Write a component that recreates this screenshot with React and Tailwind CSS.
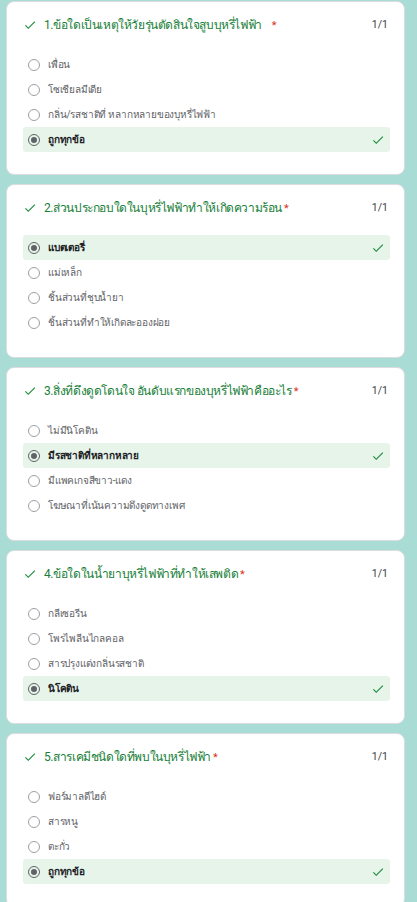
import React from "react";

const questions = [
  {
    title: "1.ข้อใดเป็นเหตุให้วัยรุ่นตัดสินใจสูบบุหรี่ไฟฟ้า",
    spaced: true,
    options: ["เพื่อน", "โซเชียลมีเดีย", "กลิ่น/รสชาติที่ หลากหลายของบุหรี่ไฟฟ้า", "ถูกทุกข้อ"],
    correct: 3,
  },
  {
    title: "2.ส่วนประกอบใดในบุหรี่ไฟฟ้าทำให้เกิดความร้อน",
    options: ["แบตเตอรี่", "แม่เหล็ก", "ชิ้นส่วนที่ชุบน้ำยา", "ชิ้นส่วนที่ทำให้เกิดละอองฝอย"],
    correct: 0,
  },
  {
    title: "3.สิ่งที่ดึงดูดโดนใจ อันดับแรกของบุหรี่ไฟฟ้าคืออะไร",
    options: ["ไม่มีนิโคติน", "มีรสชาติที่หลากหลาย", "มีแพคเกจสีขาว-แดง", "โฆษณาที่เน้นความดึงดูดทางเพศ"],
    correct: 1,
  },
  {
    title: "4.ข้อใดในน้ำยาบุหรี่ไฟฟ้าที่ทำให้เสพติด",
    options: ["กลีเซอรีน", "โพรไพลีนไกลคอล", "สารปรุงแต่งกลิ่นรสชาติ", "นิโคติน"],
    correct: 3,
  },
  {
    title: "5.สารเคมีชนิดใดที่พบในบุหรี่ไฟฟ้า",
    options: ["ฟอร์มาลดีไฮด์", "สารหนู", "ตะกั่ว", "ถูกทุกข้อ"],
    correct: 3,
  },
];

function Check({ className }) {
  return (
    <svg viewBox="0 0 24 24" className={className} fill="currentColor">
      <path d="M9 16.17L4.83 12l-1.42 1.41L9 19 21 7l-1.41-1.41z" />
    </svg>
  );
}

function Radio({ selected }) {
  return selected ? (
    <span className="w-3 h-3 rounded-full border-[1.5px] border-[#5f6368] flex items-center justify-center shrink-0">
      <span className="w-[6px] h-[6px] rounded-full bg-[#5f6368]" />
    </span>
  ) : (
    <span className="w-3 h-3 rounded-full border-[1.5px] border-[#9aa0a6] shrink-0" />
  );
}

function Card({ q }) {
  return (
    <div className="bg-white rounded-lg border border-[#dadce0] h-[174px] shrink-0 pl-4 pr-[14px] pt-[13px]">
      <div className="flex items-center h-5">
        <Check className="w-[14px] h-[14px] text-[#1e8e3e] shrink-0" />
        <div className="ml-[7px] text-[12px] tracking-[-0.4px] text-[#188038] flex-1 whitespace-nowrap">
          {q.title}
          {q.spaced ? (
            <span className="text-[#d93025] ml-[10px] text-[11px]">*</span>
          ) : (
            <span className="text-[#d93025] ml-[2px] text-[11px]">*</span>
          )}
        </div>
        <div className="text-[10.5px] text-[#3c4043] mr-[2px]">1/1</div>
      </div>
      <div className="mt-[17px] flex flex-col">
        {q.options.map((o, i) => {
          const sel = i === q.correct;
          return (
            <div
              key={i}
              className={
                "h-[25px] flex items-center pl-[5px] pr-[5px] rounded-[3px] " +
                (sel ? "bg-[#e6f4ea]" : "")
              }
            >
              <Radio selected={sel} />
              <span
                className={
                  "ml-2 text-[10px] tracking-[-0.2px] flex-1 " +
                  (sel ? "font-bold text-[#202124]" : "text-[#5f6368]")
                }
              >
                {o}
              </span>
              {sel && <Check className="w-[14px] h-[14px] text-[#1e8e3e]" />}
            </div>
          );
        })}
      </div>
    </div>
  );
}

export default function App() {
  return (
    <div
      className="w-[417px] h-[902px] overflow-hidden bg-[#a8dcd5] pt-[1px] pl-[6px] pr-[12px] flex flex-col gap-[9px]"
      style={{ fontFamily: "Roboto, 'Noto Sans', 'DejaVu Sans', sans-serif" }}
    >
      {questions.map((q, i) => (
        <Card key={i} q={q} />
      ))}
    </div>
  );
}
